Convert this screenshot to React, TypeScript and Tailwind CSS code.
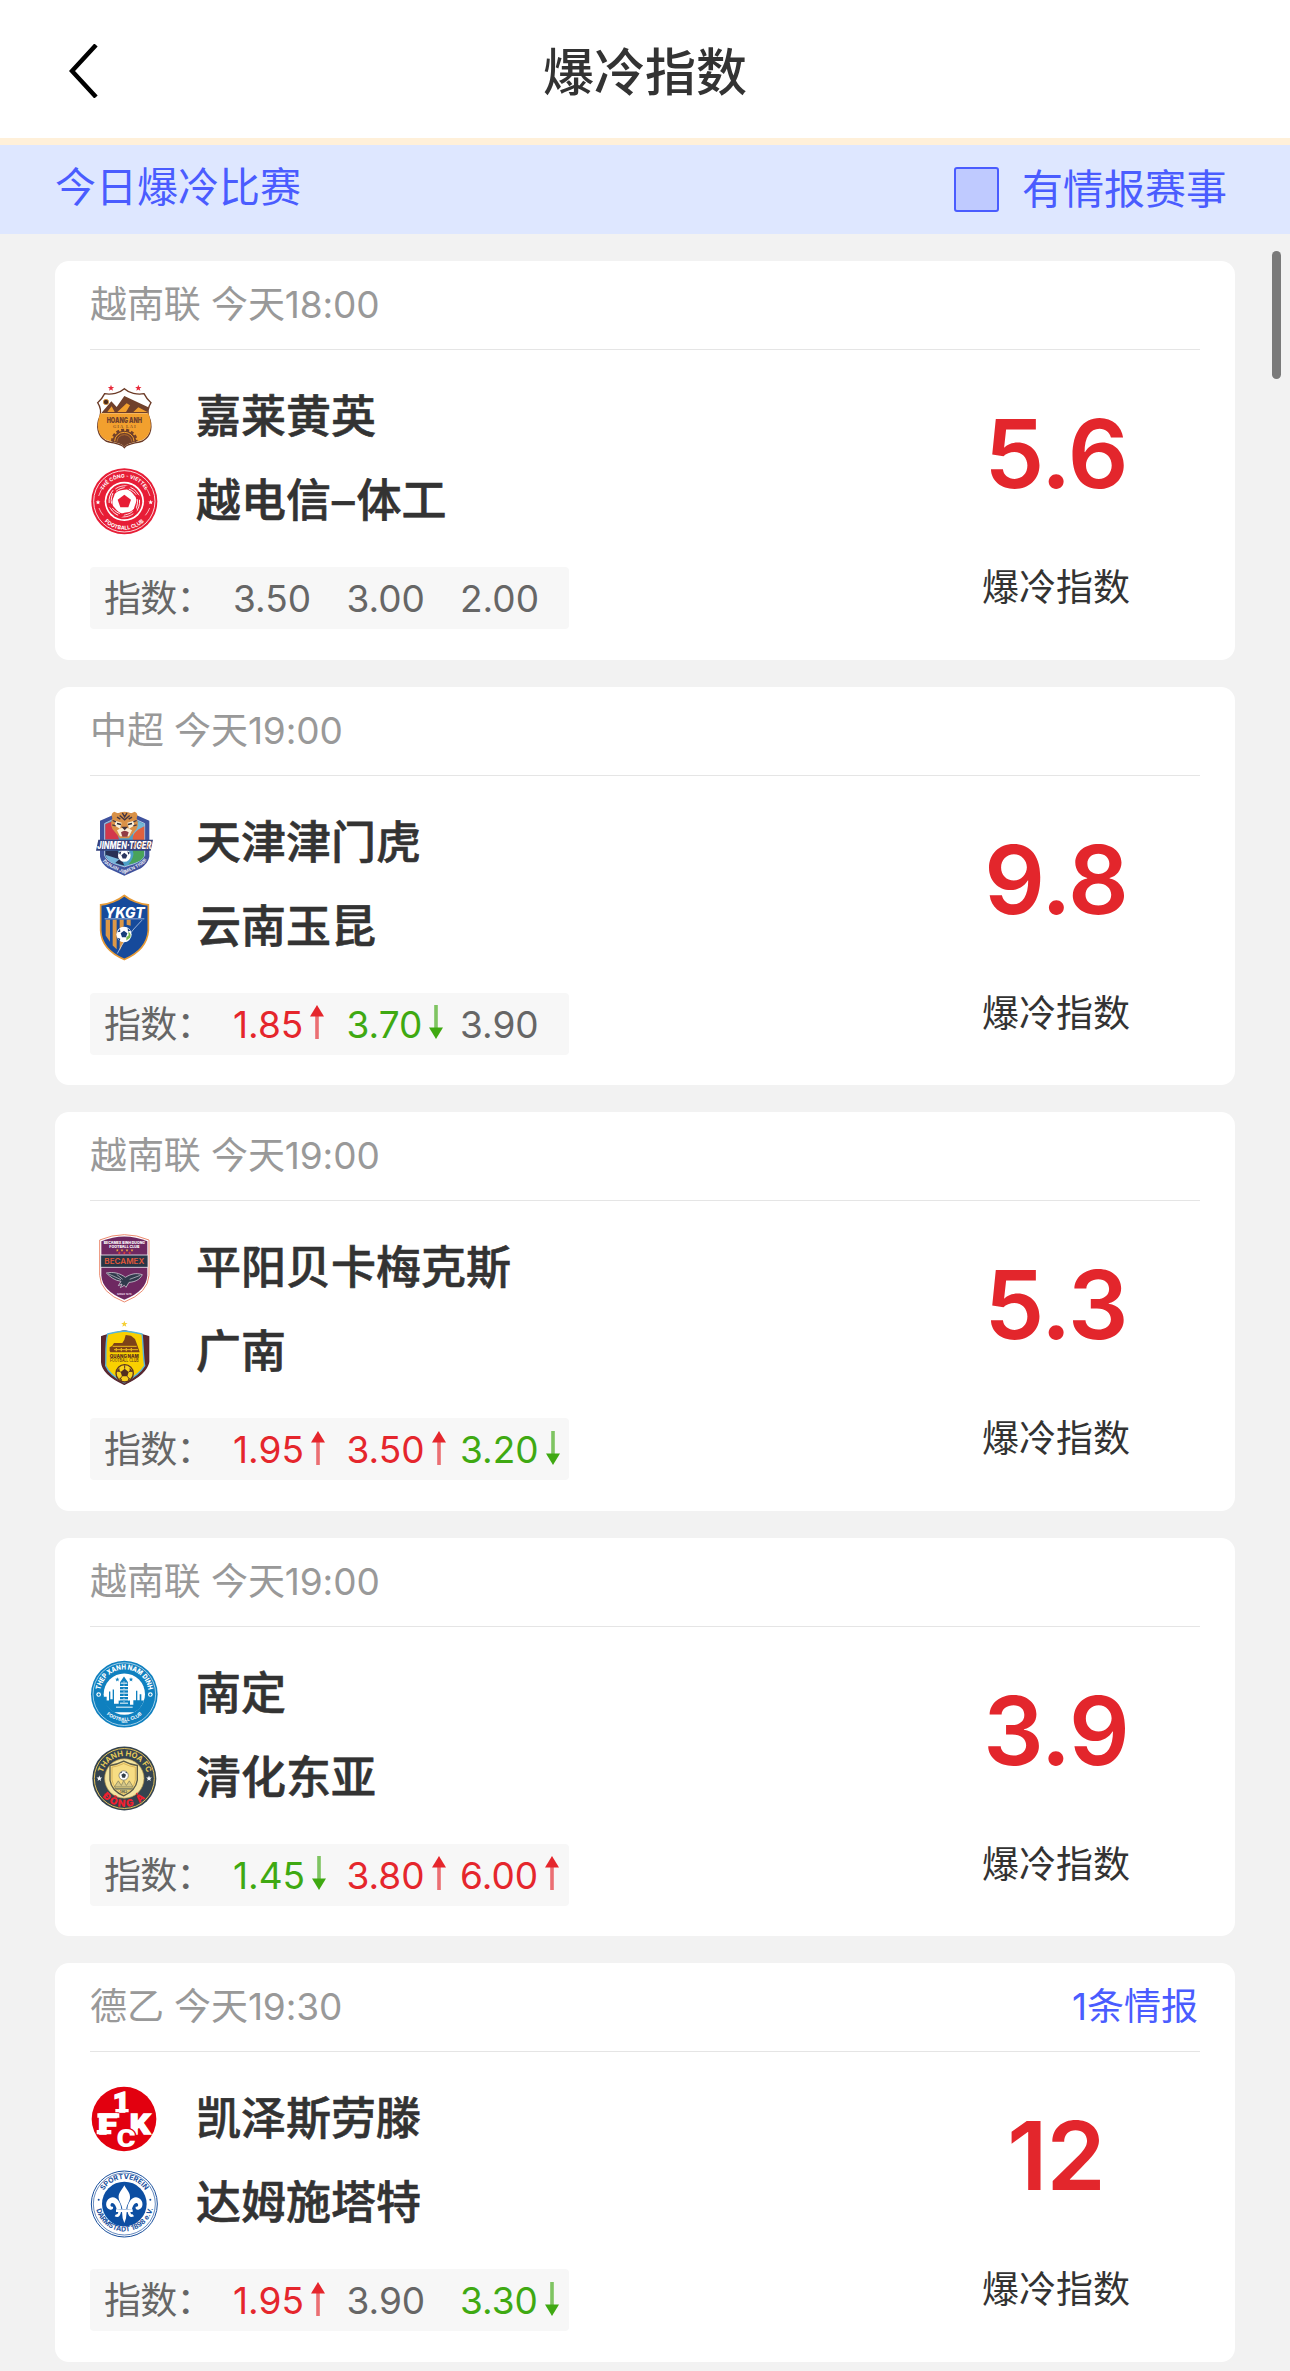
import type { ReactNode } from "react";
import clsx from "clsx";

type Trend = "up" | "down" | "flat";

interface Team {
  name: string;
  logo: ReactNode;
}

interface Match {
  league: string;
  time: string;
  home: Team;
  away: Team;
  odds: Array<{ value: string; trend: Trend }>;
  score: string;
  intel?: string;
}

const STAR = "M0,-10 L2.6,-3.2 9.5,-3.1 4,1.3 5.9,8.1 0,4.2 -5.9,8.1 -4,1.3 -9.5,-3.1 -2.6,-3.2Z";

function Crest({ viewBox, children }: { viewBox: string; children: ReactNode }) {
  return (
    <svg viewBox={viewBox} className="size-[68px] shrink-0 overflow-visible font-['Inter',sans-serif]">
      {children}
    </svg>
  );
}

function HoangAnhLogo() {
  return (
    <Crest viewBox="30 39 204 204">
      <path d={STAR} fill="#e8293a" transform="translate(93 54)" />
      <path d={STAR} fill="#e8293a" transform="translate(175 54)" />
      <path
        d="M133 56 C119 69 94 75 74 71 C69 81 62 91 53 98 C60 109 65 121 60 139 C48 166 51 198 78 213 C100 221 122 219 133 233 C144 219 166 221 188 213 C215 198 218 166 206 139 C201 121 206 109 213 98 C204 91 197 81 192 71 C172 75 147 69 133 56Z"
        fill="#fff"
        stroke="#6b3a26"
        strokeWidth="4"
      />
      <path
        d="M61 130 C48 165 51 196 79 210 C100 218 122 217 133 229 C144 217 166 218 187 210 C215 196 218 165 205 130Z"
        fill="#f2a02e"
      />
      <path d="M66 127 L94 94 110 111 133 78 205 112 203 129 66 129Z" fill="#70402b" />
      <path d="M82 126 L95 109 104 126Z M112 126 L140 100 150 106 138 126Z M160 126 L175 112 202 126Z" fill="#f2a02e" />
      <circle cx="78" cy="96" r="8" fill="#4b2d20" stroke="#f2a02e" strokeWidth="2" />
      <path d="M97 214 A36 34 0 0 1 169 214" fill="none" stroke="#70402b" strokeWidth="8" strokeDasharray="9 6" />
      <path d="M97 216 A36 34 0 0 1 169 216 Q145 218 133 230 Q121 218 97 216Z" fill="#70402b" />
      <path d="M104 214 A29 27 0 0 1 162 214" fill="none" stroke="#f2a02e" strokeWidth="3" />
      <path d="M111 215 A22 21 0 0 1 155 215" fill="none" stroke="#b36b2b" strokeWidth="3" />
      <text x="133" y="159" textAnchor="middle" fontSize="22" fontWeight="900" fill="#70402b" textLength="106" lengthAdjust="spacingAndGlyphs">
        HOANG ANH
      </text>
      <text x="133" y="173" textAnchor="middle" fontSize="13" fontWeight="700" fill="#8b5527" textLength="68" className="font-['Liberation_Serif',serif]">
        GIA LAI
      </text>
    </Crest>
  );
}

function ViettelLogo() {
  return (
    <Crest viewBox="30 291 204 204">
      <circle cx="133" cy="394" r="99" fill="#e71d36" />
      <circle cx="133" cy="394" r="92" fill="none" stroke="#fff" strokeWidth="2.5" />
      <circle cx="133" cy="394" r="59" fill="#fff" />
      {[0, 60, 120, 180, 240, 300].map((angle) => (
        <g key={angle} transform={`rotate(${angle} 133 394)`}>
          <path d="M98 356 C112 338 142 334 166 351 C155 348 145 350 140 356 C132 363 116 356 103 373 C97 379 92 365 98 356Z" fill="#e71d36" />
          <path d="M106 357 C118 348 133 346 145 348 M108 364 C118 355 128 354 137 352" fill="none" stroke="#fff" strokeWidth="2.5" />
        </g>
      ))}
      <path d="M133 374 L153 389 145 412 121 412 113 389Z" fill="#e71d36" />
      <path d={STAR} fill="#fff" transform="translate(54 397) scale(.75)" />
      <path d={STAR} fill="#fff" transform="translate(212 397) scale(.75)" />
      <path d="M56 378 Q61 361 72 349 M210 378 Q205 361 194 349 M57 414 Q62 427 70 436 M209 414 Q204 427 196 436" fill="none" stroke="#fff" strokeWidth="2" />
      <path id="vt-top" d="M68 364 A72 72 0 0 1 198 364" fill="none" />
      <path id="vt-bottom" d="M58 433 A84 84 0 0 0 208 433" fill="none" />
      <text fontSize="15" fontWeight="700" fill="#fff">
        <textPath href="#vt-top" startOffset="50%" textAnchor="middle">THỂ CÔNG - VIETTEL</textPath>
      </text>
      <text fontSize="16" fontWeight="700" fill="#fff">
        <textPath href="#vt-bottom" startOffset="50%" textAnchor="middle">FOOTBALL CLUB</textPath>
      </text>
    </Crest>
  );
}

function JinmenTigerLogo() {
  return (
    <Crest viewBox="30 40.5 204 204">
      <path d="M60 76 L91 62 Q133 40 177 62 L208 76 V184 Q204 204 183 218 L133 241 84 218 Q63 204 60 184Z" fill="#3f529d" />
      <path d="M74 84 L95 74 H172 L194 84 V180 Q186 196 162 205 L133 214 104 205 Q80 196 74 180Z" fill="#4d9fc8" stroke="#e4e8f3" strokeWidth="2" />
      <path d="M76 86 L101 76 117 132 H76Z" fill="#d3384b" />
      <path d="M192 86 L176 79 Q154 96 160 124 H192Z" fill="#74b7d6" />
      <path d="M193 92 Q150 111 160 138 H193Z" fill="#e2603d" />
      <path d="M76 166 H113 L133 210 Q80 196 76 179Z" fill="#283055" />
      <path d="M76 178 L118 191 103 205 Q80 194 76 178Z" fill="#78b6dc" />
      <path d="M192 164 H158 Q166 183 145 207 Q190 198 192 180Z" fill="#49a35a" />
      <path d="M97 68 Q91 53 103 49 L113 53 Q133 44 154 53 L164 49 Q176 53 170 68 Q180 92 163 109 L147 128 H120 L104 109 Q87 92 97 68Z" fill="#d99147" />
      <path d="M105 76 L125 82 120 100 105 91Z M162 76 L142 82 147 100 162 91Z M111 104 Q133 90 156 104 L147 122 H120Z" fill="#faeed6" />
      <path d="M127 52 L134 64 141 52 M119 60 L134 73 149 60 M98 75 L108 79 M97 88 L107 91 M170 75 L160 79 M170 88 L160 91 M111 65 L121 71 M156 65 L146 71" fill="none" stroke="#443642" strokeWidth="4" />
      <path d="M111 84 L123 87 M156 84 L144 87" stroke="#292b35" strokeWidth="5" />
      <path d="M124 94 H144 L134 104Z" fill="#3d303a" />
      <path d="M123 110 Q134 101 146 110 L142 124 H127Z" fill="#913d43" />
      <circle cx="133" cy="180" r="19" fill="#fff" />
      <path d="M133 172 L142 179 138 189 128 189 124 179Z M116 172 L124 167 121 178Z M150 172 L142 167 145 178Z" fill="#29345e" />
      <path d="M55 133 H219 L212 166 H48Z" fill="#35427e" />
      <text x="133" y="161" textAnchor="middle" fontSize="32" fontStyle="italic" fontWeight="800" fill="#fff" textLength="162" lengthAdjust="spacingAndGlyphs">
        JINMEN·TIGER
      </text>
      <path d="M160 159 L170 138 M180 159 L188 140 M200 159 L208 140" stroke="#ec8e43" strokeWidth="3" />
      <path id="jm-bottom" d="M64 176 C65 206 75 209 133 235 C190 209 201 205 204 174" fill="none" />
      <text fontSize="14" fontWeight="700" fill="#e2e5f1">
        <textPath href="#jm-bottom" startOffset="50%" textAnchor="middle">TIANJIN JINMEN TIGER</textPath>
      </text>
    </Crest>
  );
}

function YkgtLogo() {
  return (
    <Crest viewBox="30 292.5 204 204">
      <path d="M133 300 C116 314 86 326 62 328 V405 C64 449 98 477 133 492 C168 477 202 449 205 405 V328 C181 326 149 314 133 300Z" fill="#164a9b" stroke="#e69a36" strokeWidth="5" />
      <path d="M77 373 H90 V439 L77 420Z M98 373 H110 V461 L98 450Z M119 373 H131 V392 L119 405Z M140 373 H152 V391 L140 388Z M119 432 L131 440 119 466Z" fill="#dc9847" />
      <path d="M186 374 Q133 428 112 474 M74 370 H193" fill="none" stroke="#dce7f8" strokeWidth="2" />
      <circle cx="132" cy="417" r="23" fill="#fff" />
      <path d="M132 406 L142 413 138 425 126 425 122 413Z M112 410 L120 400 121 409Z M113 427 L121 430 119 437Z M143 398 L151 406 144 408Z" fill="#173d7b" />
      <path d="M145 409 Q154 414 151 426 L139 435 139 425 146 419Z" fill="#76b94d" />
      <text x="134" y="366" textAnchor="middle" fontSize="42" fontStyle="italic" fontWeight="800" fill="#fff" textLength="120" lengthAdjust="spacingAndGlyphs">
        YKGT
      </text>
    </Crest>
  );
}

function BecamexLogo() {
  return (
    <Crest viewBox="30 42 204 204">
      <path d="M59 60 Q133 28 207 60 V166 Q205 218 133 246 Q61 218 59 166Z" fill="#fff" stroke="#ed8b70" strokeWidth="3" />
      <path d="M64 64 Q133 35 202 64 V166 Q200 213 133 239 Q66 213 64 166Z" fill="#6e2861" />
      <path d="M62 105 H204 V142 H62Z" fill="#273546" stroke="#f2e9f2" strokeWidth="2.5" />
      <text x="133" y="132" textAnchor="middle" fontSize="23" fontWeight="600" fill="#e2583a" textLength="120" lengthAdjust="spacingAndGlyphs">
        BECAMEX
      </text>
      <text x="133" y="73" textAnchor="middle" fontSize="12" fontWeight="800" fill="#fff" textLength="124" lengthAdjust="spacingAndGlyphs">
        BECAMEX BINH DUONG
      </text>
      <text x="133" y="84" textAnchor="middle" fontSize="12" fontWeight="800" fill="#fff" textLength="90" lengthAdjust="spacingAndGlyphs">
        FOOTBALL CLUB
      </text>
      {[112, 126, 141, 156].map((x) => (
        <path key={x} d={STAR} fill="#efb13f" transform={`translate(${x} 91) scale(.45)`} />
      ))}
      {[118, 133, 149].map((x) => (
        <path key={x} d={STAR} fill="#e83b36" transform={`translate(${x} 99) scale(.5)`} />
      ))}
      <path d="M79 159 C99 155 120 159 136 172 C151 163 166 157 187 164 C179 180 164 186 147 187 L138 202 133 196 121 203 126 192 115 197 123 184 C103 181 91 171 79 159Z" fill="#303a4c" stroke="#cbc5d0" strokeWidth="2.5" />
      <path d="M84 161 L123 179 M149 178 L181 166 M110 163 L128 178" stroke="#d7d2dc" strokeWidth="2" />
      <text x="133" y="226" textAnchor="middle" fontSize="8" fontWeight="700" fill="#eadbea">SINCE 1976</text>
    </Crest>
  );
}

function QuangNamLogo() {
  return (
    <Crest viewBox="30 294 204 204">
      <path d={STAR} fill="#f5cf35" transform="translate(133 312)" />
      <path d="M133 333 C113 337 84 341 65 350 V426 Q67 463 133 493 Q199 463 206 426 V350 C184 341 154 337 133 333Z" fill="#5e2830" stroke="#552630" strokeWidth="4" />
      <path d="M83 342 C75 372 79 410 77 437 Q88 464 133 488 Q178 464 194 437 C189 410 190 372 186 342 Q160 336 133 333 Q106 336 83 342Z" fill="#f9d000" stroke="#57b5dc" strokeWidth="4" />
      <path d="M89 393 V382 Q98 379 102 369 H127 L133 359 137 345 153 347 165 357 174 381 179 397 91 397Z" fill="#7c4218" />
      <path d="M98 379 H170 M102 389 H174" stroke="#eab91b" strokeWidth="3" />
      <path d="M109 384 V394 M124 384 V394 M139 384 V394 M154 384 V394" stroke="#e1ac21" strokeWidth="4" />
      <text x="133" y="414" textAnchor="middle" fontSize="14" fontWeight="900" fill="#63341d" textLength="87" lengthAdjust="spacingAndGlyphs">
        QUANG NAM
      </text>
      <text x="133" y="427" textAnchor="middle" fontSize="14" fontWeight="500" fill="#63341d" textLength="86" lengthAdjust="spacingAndGlyphs">
        FOOTBALL CLUB
      </text>
      <circle cx="134" cy="460" r="26" fill="#f9d21c" stroke="#5b3423" strokeWidth="4" />
      <path d="M134 446 L146 456 142 469 126 469 122 456Z M109 455 L118 444 119 455Z M149 443 L159 456 149 455Z M117 473 L125 477 126 485Z M142 485 L145 477 153 473Z" fill="#53301f" />
      <path d="M134 446 V436 M146 456 L152 452 M142 469 L148 477 M126 469 L120 477 M122 456 L116 452" stroke="#53301f" strokeWidth="3" />
    </Crest>
  );
}

function NamDinhLogo() {
  return (
    <Crest viewBox="30 28.5 204 204">
      <circle cx="133" cy="131" r="100" fill="#0f80bf" />
      <circle cx="133" cy="131" r="94" fill="none" stroke="#e8f4fb" strokeWidth="2" />
      <circle cx="133" cy="131" r="62" fill="#fff" />
      <path
        d="M72 150 V139 H80 V150 H87 V123 H91 V146 H98 V117 H102 V160 H116 V150 H120 V95 L132 78 144 95 V150 H150 V163 H160 V149 H168 V121 H172 V149 H179 V131 H184 V150 H192 Q183 176 163 185 H102 Q80 174 72 150Z"
        fill="#0f80bf"
      />
      <path d="M122 98 H142 M120 108 H144 M120 118 H144 M119 128 H145 M119 138 H145 M118 148 H146 M120 158 H144 M108 170 H158" stroke="#fff" strokeWidth="3" />
      <path d="M132 92 V155" stroke="#fff" strokeWidth="2" strokeDasharray="4 6" />
      <path d={STAR} fill="#0f80bf" transform="translate(112 87) scale(.7)" />
      <path d={STAR} fill="#0f80bf" transform="translate(153 87) scale(.7)" />
      {[56, 211].map((cx) => (
        <g key={cx}>
          <circle cx={cx} cy="132" r="7" fill="#fff" />
          <path d={`M${cx} 128 l4 3 -2 5 h-4 l-2 -5z`} fill="#0f80bf" />
        </g>
      ))}
      <path id="nd-top" d="M61 118 A73 73 0 0 1 205 118" fill="none" />
      <path id="nd-bottom" d="M68 179 A81 81 0 0 0 198 179" fill="none" />
      <text fontSize="21" fontWeight="800" fill="#fff">
        <textPath href="#nd-top" startOffset="50%" textAnchor="middle" textLength="206" lengthAdjust="spacingAndGlyphs">THEP XANH NAM DINH</textPath>
      </text>
      <text fontSize="14" fontWeight="700" fill="#fff">
        <textPath href="#nd-bottom" startOffset="50%" textAnchor="middle">FOOTBALL CLUB</textPath>
      </text>
      <text x="133" y="218" textAnchor="middle" fontSize="8" fontWeight="700" fill="#fff">1965</text>
    </Crest>
  );
}

function ThanhHoaLogo() {
  return (
    <Crest viewBox="30 280.5 204 204">
      <circle cx="133" cy="384" r="96" fill="#34434f" />
      <circle cx="133" cy="384" r="90" fill="none" stroke="#e1c15b" strokeWidth="3" />
      <circle cx="133" cy="384" r="59" fill="#f4e5a1" stroke="#b7974b" strokeWidth="2" />
      <path d="M131 332 Q110 343 90 345 V389 Q94 421 131 436 Q167 421 172 389 V345 Q152 343 131 332Z" fill="#f7dd83" stroke="#5b5a48" strokeWidth="4" />
      <path d="M131 339 Q113 348 96 350 V388 Q101 417 131 430 Q161 417 166 388 V350 Q149 348 131 339Z" fill="none" stroke="#c99e47" strokeWidth="2" />
      <circle cx="131" cy="375" r="14" fill="#fff" stroke="#5f6462" strokeWidth="2" />
      <path d="M131 368 L138 373 135 382 127 382 124 373Z M119 369 L124 363 126 367Z M143 369 L138 363 136 367Z" fill="#313d49" />
      <path d="M103 409 L115 391 124 405 131 390 139 405 148 391 159 409Z" fill="#d6c889" stroke="#797759" strokeWidth="2" />
      <path d="M101 412 H161 L155 418 H107Z" fill="#8a8a69" />
      <text x="131" y="427" textAnchor="middle" fontSize="9" fontWeight="700" fill="#414b49">1962</text>
      <path d={STAR} fill="#fff" transform="translate(58 384) scale(.9)" />
      <path d={STAR} fill="#fff" transform="translate(207 384) scale(.9)" />
      <path id="th-top" d="M68 366 A69 69 0 0 1 200 366" fill="none" />
      <path id="th-bottom" d="M59 427 A86 86 0 0 0 207 427" fill="none" />
      <text fontSize="23" fontWeight="700" fill="#e7ca57">
        <textPath href="#th-top" startOffset="50%" textAnchor="middle">THANH HÓA FC</textPath>
      </text>
      <text fontSize="30" fontWeight="900" fill="#f0202e" letterSpacing="5">
        <textPath href="#th-bottom" startOffset="50%" textAnchor="middle">ĐÔNG Á</textPath>
      </text>
    </Crest>
  );
}

function KaiserslauternLogo() {
  return (
    <Crest viewBox="30 30 204 204">
      <circle cx="132" cy="132" r="97" fill="#e2000f" />
      <path d="M52 115 H118 V128 H52Z M50 165 H94 V178 H50Z M146 165 H168 V178 H146Z M106 102 H146 V112 H106Z" fill="#fff" />
      <g fill="#fff" stroke="#fff" strokeWidth="4" fontWeight="900" textAnchor="middle" className="font-['Roboto',sans-serif]">
        <text transform="translate(124 110) scale(1.05 1)" fontSize="84">1</text>
        <text transform="translate(83 176) scale(1.25 1)" fontSize="84">F</text>
        <text transform="translate(180 176) scale(1.15 1)" fontSize="84">K</text>
        <text transform="translate(138 217) scale(1.15 1)" fontSize="76" stroke="#e2000f" strokeWidth="8" paintOrder="stroke">C</text>
      </g>
    </Crest>
  );
}

function DarmstadtLogo() {
  return (
    <Crest viewBox="30 282 204 204">
      <circle cx="133" cy="387" r="99" fill="#fff" stroke="#184f9d" strokeWidth="3" />
      <circle cx="133" cy="387" r="93" fill="none" stroke="#184f9d" strokeWidth="2" />
      <circle cx="133" cy="387" r="67" fill="#0c4ea2" />
      <g fill="#fff">
        <path d="M133 331 C126 345 114 354 116 369 C118 382 125 387 127 402 H139 C141 387 148 382 150 369 C152 354 140 345 133 331Z" />
        <path d="M124 402 C122 379 107 361 90 369 C73 378 76 402 91 404 C96 405 101 401 99 395 C94 397 90 394 92 388 C97 377 109 391 110 404Z" />
        <path d="M142 402 C144 379 159 361 176 369 C193 378 190 402 175 404 C170 405 165 401 167 395 C172 397 176 394 174 388 C169 377 157 391 156 404Z" />
        <path d="M108 403 H158 V411 H108Z" />
        <path d="M126 411 H140 L138 430 133 444 128 430Z M123 411 Q119 432 104 424 L108 418 Q114 420 115 411Z M143 411 Q147 432 162 424 L158 418 Q152 420 151 411Z" />
      </g>
      <circle cx="56" cy="374" r="3" fill="#184f9d" />
      <circle cx="211" cy="374" r="3" fill="#184f9d" />
      <path id="da-top" d="M63 362 A74 74 0 0 1 203 362" fill="none" />
      <path id="da-bottom" d="M48 400 A87 87 0 0 0 219 397" fill="none" />
      <text fontSize="21" fontWeight="700" fill="#184f9d">
        <textPath href="#da-top" startOffset="50%" textAnchor="middle">SPORTVEREIN</textPath>
      </text>
      <text fontSize="21" fontWeight="700" fill="#184f9d">
        <textPath href="#da-bottom" startOffset="50%" textAnchor="middle">DARMSTADT 1898 e.V.</textPath>
      </text>
    </Crest>
  );
}

const matches: Match[] = [
  {
    league: "越南联",
    time: "18:00",
    home: { name: "嘉莱黄英", logo: <HoangAnhLogo /> },
    away: { name: "越电信–体工", logo: <ViettelLogo /> },
    odds: [
      { value: "3.50", trend: "flat" },
      { value: "3.00", trend: "flat" },
      { value: "2.00", trend: "flat" },
    ],
    score: "5.6",
  },
  {
    league: "中超",
    time: "19:00",
    home: { name: "天津津门虎", logo: <JinmenTigerLogo /> },
    away: { name: "云南玉昆", logo: <YkgtLogo /> },
    odds: [
      { value: "1.85", trend: "up" },
      { value: "3.70", trend: "down" },
      { value: "3.90", trend: "flat" },
    ],
    score: "9.8",
  },
  {
    league: "越南联",
    time: "19:00",
    home: { name: "平阳贝卡梅克斯", logo: <BecamexLogo /> },
    away: { name: "广南", logo: <QuangNamLogo /> },
    odds: [
      { value: "1.95", trend: "up" },
      { value: "3.50", trend: "up" },
      { value: "3.20", trend: "down" },
    ],
    score: "5.3",
  },
  {
    league: "越南联",
    time: "19:00",
    home: { name: "南定", logo: <NamDinhLogo /> },
    away: { name: "清化东亚", logo: <ThanhHoaLogo /> },
    odds: [
      { value: "1.45", trend: "down" },
      { value: "3.80", trend: "up" },
      { value: "6.00", trend: "up" },
    ],
    score: "3.9",
  },
  {
    league: "德乙",
    time: "19:30",
    home: { name: "凯泽斯劳滕", logo: <KaiserslauternLogo /> },
    away: { name: "达姆施塔特", logo: <DarmstadtLogo /> },
    odds: [
      { value: "1.95", trend: "up" },
      { value: "3.90", trend: "flat" },
      { value: "3.30", trend: "down" },
    ],
    score: "12",
    intel: "1条情报",
  },
];

function TrendArrow({ trend }: { trend: Trend }) {
  if (trend === "flat") return null;

  return (
    <svg
      viewBox="0 0 14 34"
      className={clsx("-mt-[5px] h-[34px] w-[14px] shrink-0", trend === "down" && "rotate-180")}
      fill="currentColor"
    >
      <rect x="5.2" y="10" width="3.6" height="24" opacity=".65" />
      <path d="M7 0 L14 11.5 H0Z" />
    </svg>
  );
}

function TeamRow({ team }: { team: Team }) {
  return (
    <div className="flex h-[84px] items-center">
      {team.logo}
      <span className="ml-[38px] text-[45px] leading-[84px] font-medium text-[#333] [-webkit-text-stroke:0.6px_#333]">
        {team.name.split("–").map((part, index) => (
          <span key={index}>
            {index > 0 && <span className="mr-[2px] ml-[1px] font-normal">–</span>}
            {part}
          </span>
        ))}
      </span>
    </div>
  );
}

function MatchCard({ match }: { match: Match }) {
  return (
    <div className="h-[398.5px] shrink-0 rounded-[14px] bg-white px-[35px]">
      <div className="flex h-[89px] items-center justify-between border-b border-[#e5e5e5] text-[37px] text-[#999]">
        <span className="tracking-[-0.1px]">
          {match.league} 今天{match.time}
        </span>
        {match.intel && <span className="pr-[2px] text-[#4a5cff]">{match.intel}</span>}
      </div>
      <div className="flex justify-between">
        <div className="pt-[25px]">
          <TeamRow team={match.home} />
          <TeamRow team={match.away} />
          <div className="mt-6 flex h-[62px] w-[479px] items-center rounded-[4px] bg-[#f7f7f7] pt-[2px] pl-[14px] text-[37px] text-[#666]">
            <span className="w-[129px] shrink-0 tracking-[-0.8px]">指数：</span>
            {match.odds.map((odd, index) => (
              <span
                key={index}
                className={clsx(
                  "flex w-[113.5px] shrink-0 items-center gap-[7px]",
                  odd.trend === "up" && "text-[#e5262c]",
                  odd.trend === "down" && "text-[#3fa912]",
                )}
              >
                {odd.value}
                <TrendArrow trend={odd.trend} />
              </span>
            ))}
          </div>
        </div>
        <div className="flex w-[288px] flex-col items-center pt-[54px]">
          <span className="text-[95px] leading-[100px] font-semibold tracking-[-1px] text-[#e3262c]">{match.score}</span>
          <span className="mt-[54px] text-[37px] leading-[60px] text-[#333]">爆冷指数</span>
        </div>
      </div>
    </div>
  );
}

export default function App() {
  return (
    <div className="relative flex h-[2371px] w-[1290px] flex-col overflow-hidden bg-[#f2f2f2] font-['Inter','Noto_Sans_CJK_SC',sans-serif]">
      <header className="grid h-[138px] shrink-0 grid-cols-[1fr_auto_1fr] items-center bg-white pt-[3px]">
        <svg viewBox="0 0 30 54" className="ml-[69px] h-[54px] w-[30px]" fill="none" stroke="#000" strokeWidth="4.5">
          <path d="M27 1 L3 27 L27 53" />
        </svg>
        <h1 className="pt-[4px] text-[51px] leading-[60px] font-medium text-[#333]">爆冷指数</h1>
      </header>
      <div className="h-[7px] shrink-0 bg-[#fff0d9]" />

      <div className="flex h-[89px] shrink-0 items-center justify-between bg-[#dee7ff] pr-[63px] pl-[55px] text-[41px] text-[#4a5cff]">
        <span className="pb-[3px]">今日爆冷比赛</span>
        <label className="flex items-center gap-[23px]">
          <span className="size-[45px] rounded-[3px] border-2 border-[#4a5cff] bg-[#bfcaff]" />
          有情报赛事
        </label>
      </div>

      <main className="flex flex-col gap-[27px] px-[55px] pt-[27px]">
        {matches.map((match, index) => (
          <MatchCard key={index} match={match} />
        ))}
      </main>

      {/* Scroll indicator, floats over the list */}
      <div className="absolute top-[251px] right-[9px] h-[128px] w-[9px] rounded-full bg-[#7a7a7a]" />
    </div>
  );
}
